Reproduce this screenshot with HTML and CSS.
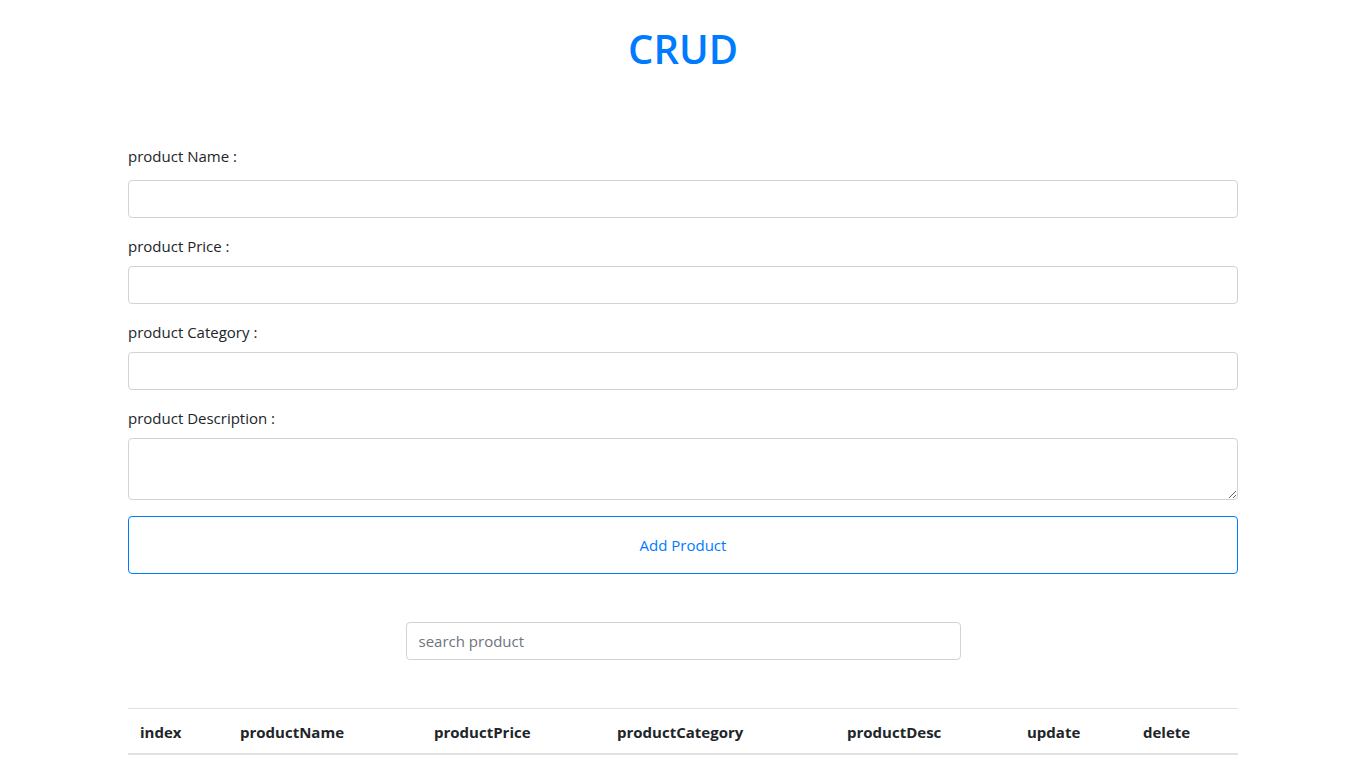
FILE: index.html
```html
<!DOCTYPE html>
<html lang="en">
<head>
<meta charset="utf-8">
<title>CRUD</title>
<link rel="stylesheet" href="styles.css">
</head>
<body>
<div class="container">
  <h1 class="title">CRUD</h1>
  <form class="form">
    <div class="form-group first">
      <label for="pName">product Name :</label>
      <input id="pName" class="form-control" type="text">
    </div>
    <div class="form-group">
      <label for="pPrice">product Price :</label>
      <input id="pPrice" class="form-control" type="text">
    </div>
    <div class="form-group">
      <label for="pCat">product Category :</label>
      <input id="pCat" class="form-control" type="text">
    </div>
    <div class="form-group">
      <label for="pDesc">product Description :</label>
      <textarea id="pDesc" class="form-control textarea" rows="2"></textarea>
    </div>
    <button type="button" class="btn-outline">Add Product</button>
  </form>
  <div class="search-wrap">
    <input class="form-control search" type="text" placeholder="search product">
  </div>
  <table class="table">
    <thead>
      <tr>
        <th class="c1">index</th>
        <th class="c2">productName</th>
        <th class="c3">productPrice</th>
        <th class="c4">productCategory</th>
        <th class="c5">productDesc</th>
        <th class="c6">update</th>
        <th class="c7">delete</th>
      </tr>
    </thead>
    <tbody></tbody>
  </table>
</div>
</body>
</html>
```

FILE: styles.css
```css
* { box-sizing: border-box; }
html, body {
  margin: 0;
  padding: 0;
  background: #fff;
}
body {
  font-family: "Open Sans", "Noto Sans", sans-serif;
  font-size: 16px;
  line-height: 1.5;
  color: #212529;
}
.container {
  width: 1140px;
  padding: 0 15px;
  margin: 0 auto;
}
.title {
  margin: 25px 0 0;
  font-size: 40px;
  line-height: 48px;
  font-weight: 600;
  color: #007bff;
  text-align: center;
}
.form {
  margin-top: 71px;
}
.form-group {
  margin-bottom: 16px;
}
label {
  display: block;
  margin-bottom: 8px;
  font-size: 15px;
  line-height: 24px;
  height: 24px;
}
.first label {
  margin-bottom: 12px;
}
.form-control {
  display: block;
  width: 100%;
  height: 38px;
  padding: 6px 12px;
  font-family: inherit;
  font-size: 16px;
  line-height: 1.5;
  color: #495057;
  background: #fff;
  border: 1px solid #ced4da;
  border-radius: 4px;
  outline: none;
  margin: 0;
}
.textarea {
  height: 62px;
  resize: vertical;
}
.btn-outline {
  display: block;
  width: 100%;
  height: 58px;
  padding: 16px 12px;
  margin: 0;
  font-family: inherit;
  font-size: 15px;
  line-height: 24px;
  color: #007bff;
  background: transparent;
  border: 1px solid #007bff;
  border-radius: 4px;
  cursor: pointer;
}
.search-wrap {
  margin-top: 48px;
  display: flex;
  justify-content: center;
}
.search {
  width: 555px;
  font-size: 15px;
}
.search::placeholder {
  color: #6c757d;
  opacity: 1;
}
.table {
  margin-top: 48px;
  width: 100%;
  border-collapse: collapse;
  table-layout: fixed;
}
.table th {
  padding: 11px 12px 9px;
  text-align: left;
  font-weight: 700;
  font-size: 15px;
  line-height: 24px;
  border-top: 1px solid #dee2e6;
  border-bottom: 2px solid #dee2e6;
  vertical-align: bottom;
}
.c1 { width: 100px; }
.c2 { width: 194px; }
.c3 { width: 183px; }
.c4 { width: 230px; }
.c5 { width: 180px; }
.c6 { width: 116px; }
.c7 { width: 107px; }
```
